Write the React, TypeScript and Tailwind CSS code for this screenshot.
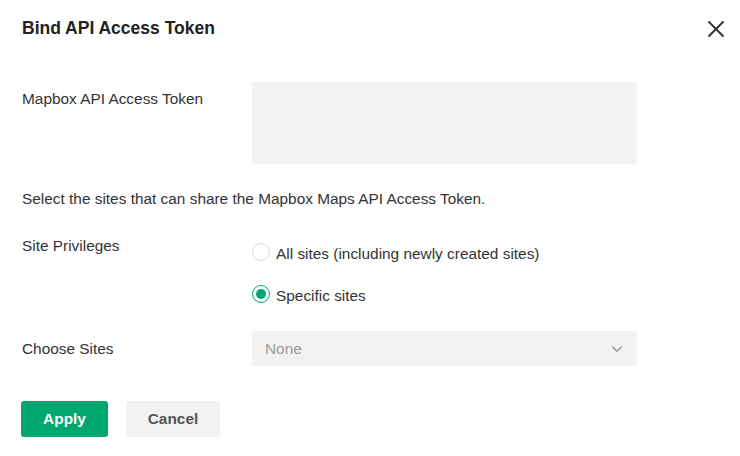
import { X, ChevronDown } from 'lucide-react';

const font = { fontFamily: '"Liberation Sans", Arial, sans-serif' };

const App = () => {
  return (
    <div className="w-[740px] h-[456px] bg-white text-[#333] relative" style={font}>
      <div className="flex items-center justify-between pl-[22px] pr-[10px] pt-[17px] h-[40px]">
        <h1 className="text-[17.5px] font-bold text-[#222]">Bind API Access Token</h1>
        <button className="text-[#333]">
          <X size={28} strokeWidth={1.6} />
        </button>
      </div>

      <div className="px-[22px] pt-[42px] text-[15.4px] leading-[20px]">
        <div className="flex">
          <label className="w-[230px] pt-[7px]">Mapbox API Access Token</label>
          <textarea className="w-[385px] h-[82px] bg-[#f2f2f2] rounded-[3px] resize-none outline-none" />
        </div>

        <p className="mt-[25px]">Select the sites that can share the Mapbox Maps API Access Token.</p>

        <div className="flex mt-[27px]">
          <label className="w-[230px]">Site Privileges</label>
          <div className="flex flex-col gap-[22px] pt-[8px]">
            <div className="flex items-center gap-[6px] h-[20px]">
              <span className="w-[18px] h-[18px] mb-[5px] rounded-full border border-[#d8d8d8] bg-white" />
              <span>All sites (including newly created sites)</span>
            </div>
            <div className="flex items-center gap-[6px] h-[20px]">
              <span className="w-[18px] h-[18px] mb-[5px] rounded-full border border-[#00a870] flex items-center justify-center">
                <span className="w-[10px] h-[10px] rounded-full bg-[#00a870]" />
              </span>
              <span>Specific sites</span>
            </div>
          </div>
        </div>

        <div className="flex items-center mt-[25px]">
          <label className="w-[230px]">Choose Sites</label>
          <div className="w-[385px] h-[35px] bg-[#f2f2f2] rounded-[3px] flex items-center justify-between pl-[13px] pr-[11px]">
            <span className="text-[#999]">None</span>
            <ChevronDown size={18} strokeWidth={1.5} className="text-[#8c8c8c]" />
          </div>
        </div>

        <div className="flex gap-[18px] mt-[35px] -ml-px">
          <button className="w-[87px] h-[36px] rounded-[3px] bg-[#00a870] text-white font-bold">Apply</button>
          <button className="w-[94px] h-[36px] rounded-[3px] bg-[#f2f2f2] text-[#555] font-bold">Cancel</button>
        </div>
      </div>
    </div>
  );
};

export default App;
